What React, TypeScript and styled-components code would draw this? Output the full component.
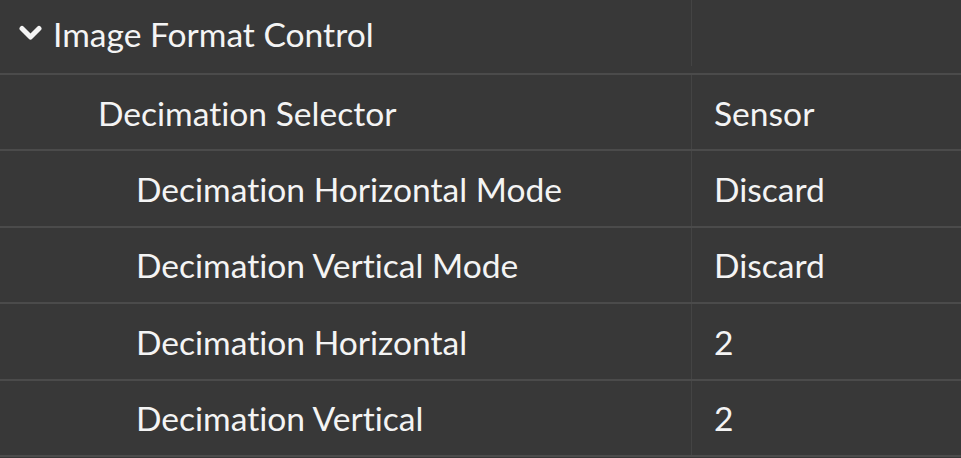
import React from "react";
import styled, { createGlobalStyle } from "styled-components";

const Global = createGlobalStyle`
  html, body { margin: 0; padding: 0; background: #383838; }
  body { font-family: "Lato", "Open Sans", sans-serif; overflow: hidden; }
`;

const Table = styled.div`
  width: 961px;
  height: 458px;
  background: #383838;
  display: flex;
  flex-direction: column;
  color: #f4f4f4;
  font-variant-ligatures: none;
  font-feature-settings: "liga" 0, "clig" 0;
`;

const Row = styled.div<{ $first?: boolean }>`
  display: grid;
  grid-template-columns: 692px 1fr;
  height: ${(p) => (p.$first ? "75px" : "76.4px")};
  padding-bottom: ${(p) => (p.$first ? "7px" : "0")};
  box-sizing: border-box;
  border-bottom: 2px solid #4b4b4b;
  flex-shrink: 0;
`;

const NameCell = styled.div<{ $indent: number }>`
  display: flex;
  align-items: center;
  padding-left: ${(p) => p.$indent}px;
  border-right: 1px solid #444444;
  font-size: 33.6px;
  white-space: nowrap;
  padding-top: 1px;
`;

const ValueCell = styled.div`
  display: flex;
  align-items: center;
  padding-left: 22px;
  font-size: 33.6px;
  white-space: nowrap;
  padding-top: 1px;
`;

const Chevron = styled.svg`
  width: 23px;
  height: 16px;
  margin-right: 11px;
  margin-top: -2px;
  flex-shrink: 0;
`;

const rows = [
  { name: "Decimation Selector", value: "Sensor", indent: 98 },
  { name: "Decimation Horizontal Mode", value: "Discard", indent: 136 },
  { name: "Decimation Vertical Mode", value: "Discard", indent: 136 },
  { name: "Decimation Horizontal", value: "2", indent: 136 },
  { name: "Decimation Vertical", value: "2", indent: 136 },
];

export default function App() {
  return (
    <>
      <Global />
      <Table>
        <Row $first>
          <NameCell $indent={19}>
            <Chevron viewBox="0 0 23 16">
              <path
                d="M3 3.5 L11.5 12 L20 3.5"
                fill="none"
                stroke="#f4f4f4"
                strokeWidth="5"
                strokeLinecap="round"
                strokeLinejoin="round"
              />
            </Chevron>
            Image Format Control
          </NameCell>
          <ValueCell />
        </Row>
        {rows.map((r) => (
          <Row key={r.name}>
            <NameCell $indent={r.indent}>{r.name}</NameCell>
            <ValueCell>{r.value}</ValueCell>
          </Row>
        ))}
      </Table>
    </>
  );
}
